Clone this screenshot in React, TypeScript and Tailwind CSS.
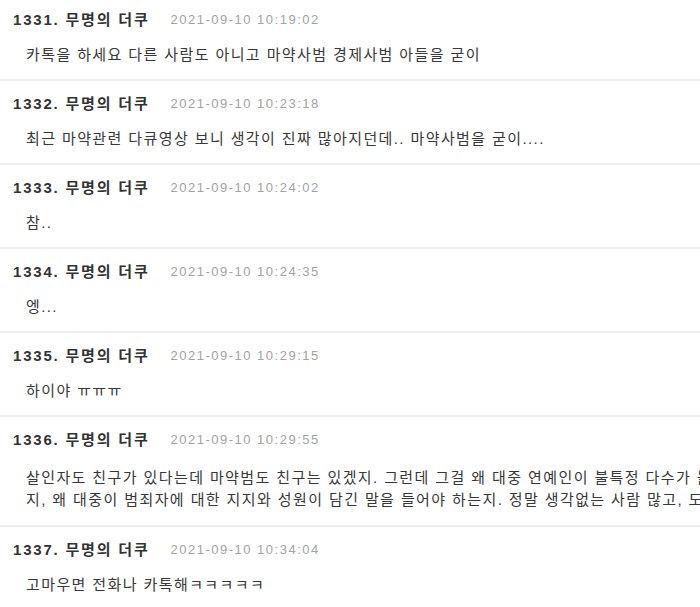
import React from "react";

type Comment = {
  no: number;
  time: string;
  lines: string[];
};

const comments: Comment[] = [
  { no: 1331, time: "2021-09-10 10:19:02", lines: ["카톡을 하세요 다른 사람도 아니고 마약사범 경제사범 아들을 굳이"] },
  { no: 1332, time: "2021-09-10 10:23:18", lines: ["최근 마약관련 다큐영상 보니 생각이 진짜 많아지던데.. 마약사범을 굳이...."] },
  { no: 1333, time: "2021-09-10 10:24:02", lines: ["참.."] },
  { no: 1334, time: "2021-09-10 10:24:35", lines: ["엥..."] },
  { no: 1335, time: "2021-09-10 10:29:15", lines: ["하이야 ㅠㅠㅠ"] },
  {
    no: 1336,
    time: "2021-09-10 10:29:55",
    lines: [
      "살인자도 친구가 있다는데 마약범도 친구는 있겠지. 그런데 그걸 왜 대중 연예인이 불특정 다수가 볼 수 있는 곳에 올려야 하는",
      "지, 왜 대중이 범죄자에 대한 지지와 성원이 담긴 말을 들어야 하는지. 정말 생각없는 사람 많고, 도덕 불감증이 심각한 것 같다.",
    ],
  },
  { no: 1337, time: "2021-09-10 10:34:04", lines: ["고마우면 전화나 카톡해ㅋㅋㅋㅋㅋ"] },
];

export default function App() {
  return (
    <div
      className="w-[700px] h-[607px] overflow-hidden bg-white text-[#333]"
      style={{ fontFamily: '"Liberation Sans", "Noto Sans CJK KR", sans-serif' }}
    >
      <ul className="w-[1000px] -mt-[3px]">
        {comments.map((c) => {
          const multi = c.lines.length > 1;
          return (
            <li
              key={c.no}
              className={`pt-[13px] border-b-2 border-[#eeeeee] ${multi ? "pb-[14px]" : "pb-[13px]"}`}
            >
              <div className="flex items-center h-[20px] pl-[13px]">
                <span className="text-[15px] font-bold tracking-[1.8px] text-[#333] whitespace-nowrap">
                  {c.no}. 무명의 더쿠
                </span>
                <span className="ml-[21px] text-[13px] tracking-[1.5px] text-[#a3a3a3] whitespace-nowrap">
                  {c.time}
                </span>
              </div>
              <div
                className={`pl-[26px] text-[15px] leading-[22px] tracking-[1.4px] text-[#383838] ${
                  multi ? "mt-[17px]" : "mt-[14px]"
                }`}
              >
                {c.lines.map((l, i) => (
                  <p key={i} className="whitespace-nowrap">
                    {l}
                  </p>
                ))}
              </div>
            </li>
          );
        })}
      </ul>
    </div>
  );
}
